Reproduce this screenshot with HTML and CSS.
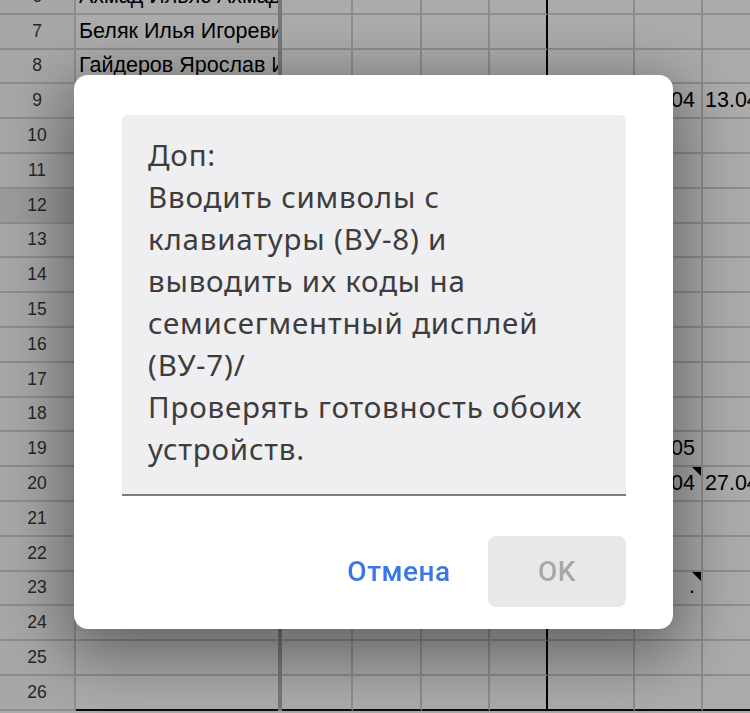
FILE: index.html
```html
<!DOCTYPE html>
<html lang="ru">
<head>
<meta charset="utf-8">
<title>Заметка</title>
<link rel="stylesheet" href="styles.css">
</head>
<body>
<div class="sheet">
  <div class="row"><div class="hdr">6</div><div class="c a">Ахмад Ильяс Ахмадович</div><div class="fz"></div><div class="c"></div><div class="c"></div><div class="c"></div><div class="c e"></div><div class="c"></div><div class="c"></div><div class="c h"></div></div>
  <div class="row"><div class="hdr">7</div><div class="c a">Беляк Илья Игоревич</div><div class="fz"></div><div class="c"></div><div class="c"></div><div class="c"></div><div class="c e"></div><div class="c"></div><div class="c"></div><div class="c h"></div></div>
  <div class="row"><div class="hdr">8</div><div class="c a">Гайдеров Ярослав Игоревич</div><div class="fz"></div><div class="c"></div><div class="c"></div><div class="c"></div><div class="c e"></div><div class="c"></div><div class="c"></div><div class="c h"></div></div>
  <div class="row"><div class="hdr">9</div><div class="c a"></div><div class="fz"></div><div class="c"></div><div class="c"></div><div class="c"></div><div class="c e"></div><div class="c"></div><div class="c r">12.04</div><div class="c h">13.04</div></div>
  <div class="row"><div class="hdr">10</div><div class="c a"></div><div class="fz"></div><div class="c"></div><div class="c"></div><div class="c"></div><div class="c e"></div><div class="c"></div><div class="c"></div><div class="c h"></div></div>
  <div class="row"><div class="hdr">11</div><div class="c a"></div><div class="fz"></div><div class="c"></div><div class="c"></div><div class="c"></div><div class="c e"></div><div class="c"></div><div class="c"></div><div class="c h"></div></div>
  <div class="row"><div class="hdr sel">12</div><div class="c a"></div><div class="fz"></div><div class="c"></div><div class="c"></div><div class="c"></div><div class="c e"></div><div class="c"></div><div class="c"></div><div class="c h"></div></div>
  <div class="row"><div class="hdr">13</div><div class="c a"></div><div class="fz"></div><div class="c"></div><div class="c"></div><div class="c"></div><div class="c e"></div><div class="c"></div><div class="c"></div><div class="c h"></div></div>
  <div class="row"><div class="hdr">14</div><div class="c a"></div><div class="fz"></div><div class="c"></div><div class="c"></div><div class="c"></div><div class="c e"></div><div class="c"></div><div class="c"></div><div class="c h"></div></div>
  <div class="row"><div class="hdr">15</div><div class="c a"></div><div class="fz"></div><div class="c"></div><div class="c"></div><div class="c"></div><div class="c e"></div><div class="c"></div><div class="c"></div><div class="c h"></div></div>
  <div class="row"><div class="hdr">16</div><div class="c a"></div><div class="fz"></div><div class="c"></div><div class="c"></div><div class="c"></div><div class="c e"></div><div class="c"></div><div class="c"></div><div class="c h"></div></div>
  <div class="row"><div class="hdr">17</div><div class="c a"></div><div class="fz"></div><div class="c"></div><div class="c"></div><div class="c"></div><div class="c e"></div><div class="c"></div><div class="c"></div><div class="c h"></div></div>
  <div class="row"><div class="hdr">18</div><div class="c a"></div><div class="fz"></div><div class="c"></div><div class="c"></div><div class="c"></div><div class="c e"></div><div class="c"></div><div class="c"></div><div class="c h"></div></div>
  <div class="row"><div class="hdr">19</div><div class="c a"></div><div class="fz"></div><div class="c"></div><div class="c"></div><div class="c"></div><div class="c e"></div><div class="c"></div><div class="c r">21.05</div><div class="c h"></div></div>
  <div class="row"><div class="hdr">20</div><div class="c a"></div><div class="fz"></div><div class="c"></div><div class="c"></div><div class="c"></div><div class="c e"></div><div class="c"></div><div class="c r note">20.04</div><div class="c h">27.04</div></div>
  <div class="row"><div class="hdr">21</div><div class="c a"></div><div class="fz"></div><div class="c"></div><div class="c"></div><div class="c"></div><div class="c e"></div><div class="c"></div><div class="c"></div><div class="c h"></div></div>
  <div class="row"><div class="hdr">22</div><div class="c a"></div><div class="fz"></div><div class="c"></div><div class="c"></div><div class="c"></div><div class="c e"></div><div class="c"></div><div class="c"></div><div class="c h"></div></div>
  <div class="row"><div class="hdr">23</div><div class="c a"></div><div class="fz"></div><div class="c"></div><div class="c"></div><div class="c"></div><div class="c e"></div><div class="c"></div><div class="c r low note">.</div><div class="c h"></div></div>
  <div class="row"><div class="hdr">24</div><div class="c a"></div><div class="fz"></div><div class="c"></div><div class="c"></div><div class="c"></div><div class="c e"></div><div class="c"></div><div class="c"></div><div class="c h"></div></div>
  <div class="row"><div class="hdr">25</div><div class="c a"></div><div class="fz"></div><div class="c"></div><div class="c"></div><div class="c"></div><div class="c e"></div><div class="c"></div><div class="c"></div><div class="c h"></div></div>
  <div class="row last"><div class="hdr">26</div><div class="c a"></div><div class="fz"></div><div class="c"></div><div class="c"></div><div class="c"></div><div class="c e"></div><div class="c"></div><div class="c"></div><div class="c h"></div></div>
</div>

<div class="overlay">
  <div class="dialog" role="dialog">
    <div class="field">Доп:<br>Вводить символы с<br>клавиатуры (ВУ-8) и<br>выводить их коды на<br>семисегментный дисплей<br>(ВУ-7)/<br>Проверять готовность обоих<br>устройств.</div>
    <div class="actions">
      <div class="btn cancel">Отмена</div>
      <div class="btn ok">OK</div>
    </div>
  </div>
</div>
</body>
</html>
```

FILE: styles.css
```css
html, body {
  margin: 0;
  padding: 0;
  height: 100%;
  overflow: hidden;
}

body {
  font-family: "Liberation Sans", Arial, sans-serif;
  background: #ffffff;
}

.sheet {
  margin-top: -20px;
}

.row {
  display: grid;
  grid-template-columns: 76px 202px 4px 71px 69px 68px 58px 87px 68px 1fr;
  height: 34.8px;
}

.row > div {
  box-sizing: border-box;
  border-right: 2px solid #d2d2d2;
  border-bottom: 2px solid #d2d2d2;
  min-width: 0;
}

.hdr {
  background: #f9f9fa;
  color: #3a3a3a;
  font-size: 17.5px;
  display: flex;
  align-items: center;
  justify-content: center;
}

.hdr.sel {
  background: #e6e7e9;
}

.c {
  position: relative;
  display: flex;
  align-items: center;
  padding: 0 3px;
  font-size: 21.5px;
  color: #000;
  white-space: nowrap;
  overflow: hidden;
}

.row > .a {
  border-right: none;
}

.row > .fz {
  background: #b2b2b2;
  border-right: none;
  border-bottom: none;
}

.row > .e {
  border-right-color: #000;
}

.row > .h {
  border-right: none;
  padding-left: 2px;
}

.r {
  justify-content: flex-end;
  padding-right: 6px;
}

.low {
  align-items: flex-end;
  padding-bottom: 5px;
}

.note::after {
  content: "";
  position: absolute;
  top: 0;
  right: 0;
  border-top: 9px solid #000;
  border-left: 9px solid transparent;
}

.row.last > .c {
  border-bottom-color: #111;
}

.overlay {
  position: fixed;
  inset: 0;
  background: rgba(0, 0, 0, 0.33);
  display: flex;
  align-items: flex-start;
  justify-content: flex-start;
  padding: 75px 0 0 74px;
}

.dialog {
  width: 599px;
  height: 554px;
  box-sizing: border-box;
  background: #ffffff;
  border-radius: 14px;
  padding: 40px 47px 22px 48px;
  display: flex;
  flex-direction: column;
  box-shadow: 0 18px 64px 10px rgba(0, 0, 0, 0.42);
}

.field {
  background: #efeff1;
  border-radius: 6px 6px 0 0;
  border-bottom: 2px solid #7c7c7c;
  padding: 19px 10px 24px 26px;
  font-family: "Noto Sans", Roboto, sans-serif;
  font-size: 29.5px;
  letter-spacing: 0.8px;
  line-height: 42px;
  color: #3d3d3d;
  white-space: nowrap;
  overflow: hidden;
}

.actions {
  margin-top: 40px;
  display: flex;
  justify-content: flex-end;
  gap: 20px;
}

.btn {
  width: 138px;
  height: 71px;
  border-radius: 8px;
  display: flex;
  align-items: center;
  justify-content: center;
  font-family: Roboto, "Noto Sans", sans-serif;
  font-weight: 500;
  font-size: 28px;
  letter-spacing: 0.5px;
}

.cancel {
  color: #3b78e7;
}

.ok {
  background: #e8e8e8;
  color: #a8a8a8;
}
```
